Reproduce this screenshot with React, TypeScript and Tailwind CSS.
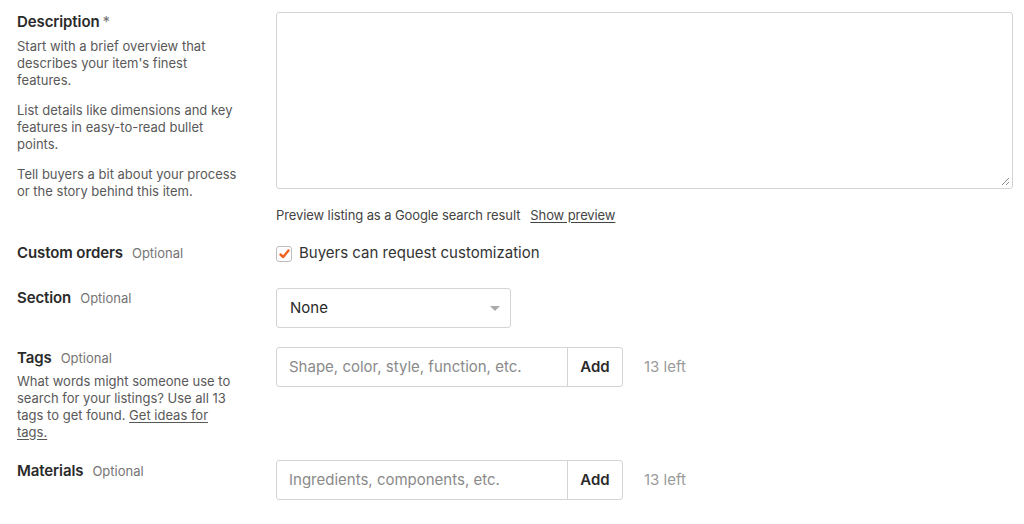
import React from 'react';

const font = { fontFamily: 'Inter, "Noto Sans", Arial, sans-serif' };

function Label({ title, optional, required }: { title: string; optional?: boolean; required?: boolean }) {
  return (
    <div className="flex items-baseline gap-[9px] h-[20px]">
      <span className="text-[15px] font-semibold text-[#2a2a2a] tracking-[-0.1px]">
        {title}
        {required && <span className="text-[#757575] font-normal ml-[3px]">*</span>}
      </span>
      {optional && <span className="text-[13px] text-[#757575]">Optional</span>}
    </div>
  );
}

function AddInput({ placeholder }: { placeholder: string }) {
  return (
    <div className="flex items-center">
      <div className="flex w-[347px] h-[40px] border border-[#d4d4d4] rounded-[3px] bg-white">
        <div className="flex-1 flex items-center px-[12px] pt-[1px] text-[15px] text-[#8a8a8a]">{placeholder}</div>
        <div className="w-[55px] border-l border-[#d4d4d4] flex items-center justify-center pt-[1px] text-[15px] font-semibold text-[#2a2a2a]">
          Add
        </div>
      </div>
      <span className="ml-[21px] pt-[1px] text-[15px] text-[#9a9a9a]">13 left</span>
    </div>
  );
}

export default function App() {
  return (
    <div className="w-[1024px] h-[524px] bg-white overflow-hidden" style={font}>
      {/* Description */}
      <div className="flex pt-[11px]">
        <div className="w-[276px] pl-[17px] pr-[36px]">
          <Label title="Description" required />
          <div className="mt-[7px] text-[13px] leading-[17px] text-[#595959] space-y-[13px]">
            <p>Start with a brief overview that describes your item's finest features.</p>
            <p>List details like dimensions and key features in easy-to-read bullet points.</p>
            <p>Tell buyers a bit about your process or the story behind this item.</p>
          </div>
        </div>
        <div className="flex-1 pr-[11px] pt-[1px]">
          <div className="relative h-[177px] border border-[#d4d4d4] rounded-[3px] bg-white">
            <svg className="absolute right-[2px] bottom-[2px]" width="9" height="9" viewBox="0 0 9 9">
              <path d="M8 1L1 8M8 5L5 8" stroke="#8a8a8a" strokeWidth="1" />
            </svg>
          </div>
          <div className="mt-[17px] text-[13px] text-[#444] flex gap-[10px] tracking-[-0.1px]">
            <span>Preview listing as a Google search result</span>
            <span className="underline underline-offset-2">Show preview</span>
          </div>
        </div>
      </div>

      {/* Custom orders */}
      <div className="flex mt-[16px]">
        <div className="w-[276px] pl-[17px]">
          <Label title="Custom orders" optional />
        </div>
        <div className="flex items-center gap-[7px] h-[20px] mt-[2px]">
          <div className="w-[16px] h-[16px] border border-[#bdbdbd] rounded-[3px] bg-white flex items-center justify-center">
            <svg width="11" height="10" viewBox="0 0 11 10">
              <path d="M1.5 5.5L4.2 8L9.5 1.5" fill="none" stroke="#f1641e" strokeWidth="2.4" strokeLinecap="round" strokeLinejoin="round" />
            </svg>
          </div>
          <span className="text-[15px] text-[#333]">Buyers can request customization</span>
        </div>
      </div>

      {/* Section */}
      <div className="flex mt-[23px]">
        <div className="w-[276px] pl-[17px]">
          <Label title="Section" optional />
        </div>
        <div className="relative w-[235px] h-[40px] mt-[1px] border border-[#d4d4d4] rounded-[3px] bg-white flex items-center px-[13px] pt-[1px] text-[15px] text-[#2a2a2a]">
          None
          <span className="absolute right-[10px] top-[17px] w-0 h-0 border-l-[5px] border-r-[5px] border-t-[5px] border-l-transparent border-r-transparent border-t-[#aaa]" />
        </div>
      </div>

      {/* Tags */}
      <div className="flex mt-[19px]">
        <div className="w-[276px] pl-[17px] pr-[36px]">
          <Label title="Tags" optional />
          <p className="mt-[6px] text-[13px] leading-[17px] text-[#595959]">
            What words might someone use to search for your listings? Use all 13 tags to get found.{' '}
            <span className="underline underline-offset-2">Get ideas for tags.</span>
          </p>
        </div>
        <div>
          <AddInput placeholder="Shape, color, style, function, etc." />
        </div>
      </div>

      {/* Materials */}
      <div className="flex mt-[19px]">
        <div className="w-[276px] pl-[17px]">
          <Label title="Materials" optional />
        </div>
        <div>
          <AddInput placeholder="Ingredients, components, etc." />
        </div>
      </div>
    </div>
  );
}
